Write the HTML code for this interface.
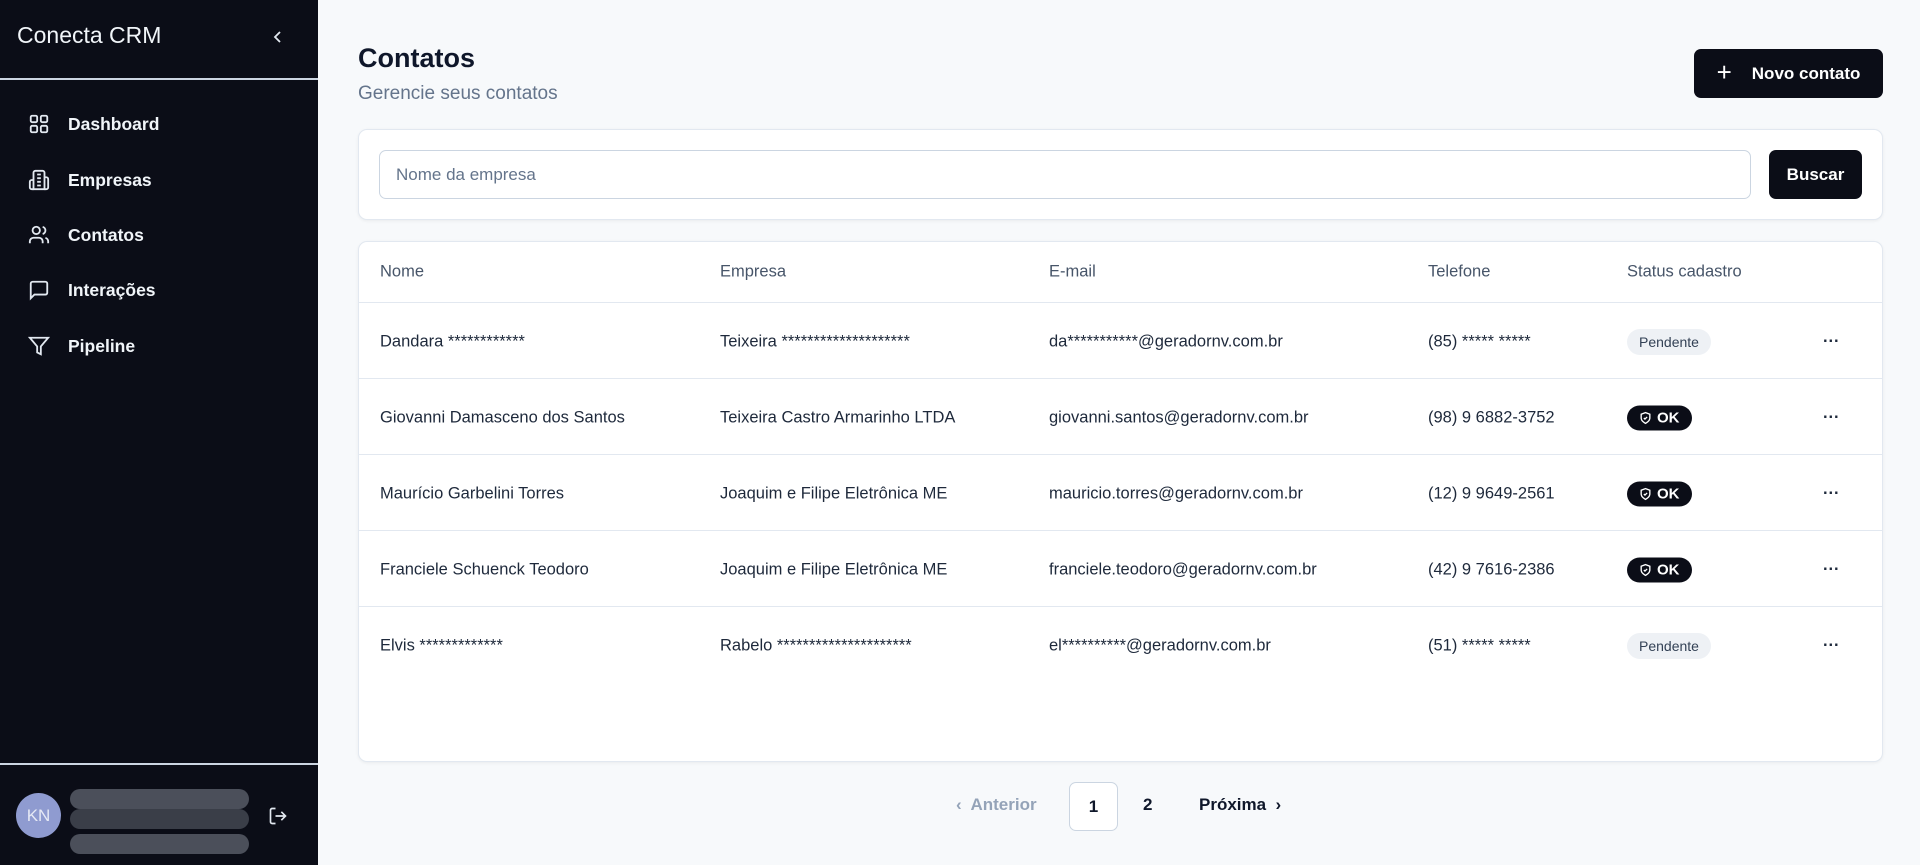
<!DOCTYPE html>
<html><head><meta charset="utf-8"><style>
*{box-sizing:border-box;margin:0;padding:0}
body{width:1920px;height:865px;overflow:hidden;background:#f7f9fb;font-family:"Liberation Sans",sans-serif;color:#0f172a;position:relative}
.sb{position:absolute;left:0;top:0;width:318px;height:865px;background:#0b0d17;color:#f1f5f9}
.sb .t{position:absolute;left:17px;top:22px;font-size:23px}
.sb .chev{position:absolute;left:272px;top:27px}
.sb .hr{position:absolute;left:0;width:318px;height:1.5px;background:#cbd5e1}
.nav{position:absolute;left:28px;display:flex;align-items:center;font-size:17.5px;font-weight:bold}
.nav svg{margin-right:18px}
.av{position:absolute;left:16px;top:793px;width:45px;height:45px;border-radius:50%;background:#8f9bd0;color:#e6e9f5;font-size:17px;display:flex;align-items:center;justify-content:center}
.bl{position:absolute;left:70px;width:179px;height:20px;border-radius:10px;background:#4b4f5a}
.h1{position:absolute;left:358px;top:43px;font-size:27px;font-weight:bold}
.sub{position:absolute;left:358px;top:83px;font-size:19px;color:#64748b}
.btn{position:absolute;background:#0b0d17;color:#fff;border-radius:7px;font-weight:bold;font-size:17px;display:flex;align-items:center;justify-content:center}
.card{position:absolute;left:358px;width:1525px;background:#fff;border:1px solid #e2e8f0;border-radius:9px;box-shadow:0 1px 3px rgba(0,0,0,.06)}
.inp{position:absolute;left:20px;top:20px;width:1372px;height:49px;border:1px solid #cbd5e1;border-radius:7px;font-size:17px;color:#64748b;padding:14px 16px}
.row{position:absolute;left:0;width:1523px;height:76px;border-top:1px solid #e2e8f0;font-size:16.5px;color:#1e293b}
.row span,.hd span{position:absolute;top:50%;transform:translateY(-50%);white-space:nowrap}
.row span{margin-top:1px}
.hd{position:absolute;left:0;top:0;width:1523px;height:60px;font-size:16.5px;color:#475569}
.pend{background:#eef1f5;color:#334155;font-size:14px;padding:5px 12px;border-radius:14px}
.ok{background:#0b0d17;color:#fff;font-size:15px;font-weight:bold;padding:4px 12px 4px 12px;border-radius:14px;display:flex;align-items:center;gap:5px}
.pg{position:absolute;top:795px;font-size:17px}
</style></head><body>
<div class="sb">
<div class="t">Conecta CRM</div>
<svg class="chev" width="12" height="20" viewBox="0 0 12 20"><path d="M8 5 L3 10 L8 15" stroke="#e2e8f0" stroke-width="1.8" fill="none"/></svg>
<div class="hr" style="top:78px"></div>
<div class="nav" style="top:113px"><svg width="22" height="22" viewBox="0 0 24 24" fill="none" stroke="#e2e8f0" stroke-width="2"><rect x="3" y="3" width="7" height="7" rx="1.5"/><rect x="14" y="3" width="7" height="7" rx="1.5"/><rect x="14" y="14" width="7" height="7" rx="1.5"/><rect x="3" y="14" width="7" height="7" rx="1.5"/></svg>Dashboard</div>
<div class="nav" style="top:169px"><svg width="22" height="22" viewBox="0 0 24 24" fill="none" stroke="#e2e8f0" stroke-width="2"><path d="M6 22V4a2 2 0 0 1 2-2h8a2 2 0 0 1 2 2v18Z"/><path d="M6 12H4a2 2 0 0 0-2 2v6a2 2 0 0 0 2 2h2M18 9h2a2 2 0 0 1 2 2v9a2 2 0 0 1-2 2h-2M10 6h4M10 10h4M10 14h4M10 18h4"/></svg>Empresas</div>
<div class="nav" style="top:224px"><svg width="22" height="22" viewBox="0 0 24 24" fill="none" stroke="#e2e8f0" stroke-width="2"><path d="M16 21v-2a4 4 0 0 0-4-4H6a4 4 0 0 0-4 4v2"/><circle cx="9" cy="7" r="4"/><path d="M22 21v-2a4 4 0 0 0-3-3.87M16 3.13a4 4 0 0 1 0 7.75"/></svg>Contatos</div>
<div class="nav" style="top:279px"><svg width="22" height="22" viewBox="0 0 24 24" fill="none" stroke="#e2e8f0" stroke-width="2"><path d="M21 15a2 2 0 0 1-2 2H7l-4 4V5a2 2 0 0 1 2-2h14a2 2 0 0 1 2 2z"/></svg>Interações</div>
<div class="nav" style="top:335px"><svg width="22" height="22" viewBox="0 0 24 24" fill="none" stroke="#e2e8f0" stroke-width="2"><path d="M22 3H2l8 9.46V19l4 2v-8.54L22 3z"/></svg>Pipeline</div>
<div class="hr" style="top:763px"></div>
<div class="av">KN</div>
<div class="bl" style="top:789px"></div><div class="bl" style="top:809px;background:#3a3e48"></div><div class="bl" style="top:834px"></div>
<svg style="position:absolute;left:268px;top:806px" width="20" height="20" viewBox="0 0 24 24" fill="none" stroke="#e2e8f0" stroke-width="2"><path d="M9 21H5a2 2 0 0 1-2-2V5a2 2 0 0 1 2-2h4M16 17l5-5-5-5M21 12H9"/></svg>
</div>
<div class="h1">Contatos</div>
<div class="sub">Gerencie seus contatos</div>
<div class="btn" style="left:1694px;top:49px;width:189px;height:49px"><span style="font-size:26px;font-weight:normal;margin-right:20px;margin-top:-3px">+</span>Novo contato</div>
<div class="card" style="top:129px;height:91px">
<div class="inp">Nome da empresa</div>
<div class="btn" style="left:1410px;top:20px;width:93px;height:49px">Buscar</div>
</div>
<div class="card" style="top:241px;height:521px">
<div class="hd"><span style="left:21px">Nome</span><span style="left:361px">Empresa</span><span style="left:690px">E-mail</span><span style="left:1069px">Telefone</span><span style="left:1268px">Status cadastro</span></div>
<div class="row" style="top:60px"><span style="left:21px">Dandara ************</span><span style="left:361px">Teixeira ********************</span><span style="left:690px">da***********@geradornv.com.br</span><span style="left:1069px">(85) ***** *****</span><span class="pend" style="left:1268px">Pendente</span><span style="left:1464px;font-weight:bold">···</span></div>
<div class="row" style="top:136px"><span style="left:21px">Giovanni Damasceno dos Santos</span><span style="left:361px">Teixeira Castro Armarinho LTDA</span><span style="left:690px">giovanni.santos@geradornv.com.br</span><span style="left:1069px">(98) 9 6882-3752</span><span class="ok" style="left:1268px"><svg width="13" height="13" viewBox="0 0 24 24" fill="none" stroke="#fff" stroke-width="2.5"><path d="M12 22s8-4 8-10V5l-8-3-8 3v7c0 6 8 10 8 10z"/><path d="M9 12l2 2 4-4"/></svg>OK</span><span style="left:1464px;font-weight:bold">···</span></div>
<div class="row" style="top:212px"><span style="left:21px">Maurício Garbelini Torres</span><span style="left:361px">Joaquim e Filipe Eletrônica ME</span><span style="left:690px">mauricio.torres@geradornv.com.br</span><span style="left:1069px">(12) 9 9649-2561</span><span class="ok" style="left:1268px"><svg width="13" height="13" viewBox="0 0 24 24" fill="none" stroke="#fff" stroke-width="2.5"><path d="M12 22s8-4 8-10V5l-8-3-8 3v7c0 6 8 10 8 10z"/><path d="M9 12l2 2 4-4"/></svg>OK</span><span style="left:1464px;font-weight:bold">···</span></div>
<div class="row" style="top:288px"><span style="left:21px">Franciele Schuenck Teodoro</span><span style="left:361px">Joaquim e Filipe Eletrônica ME</span><span style="left:690px">franciele.teodoro@geradornv.com.br</span><span style="left:1069px">(42) 9 7616-2386</span><span class="ok" style="left:1268px"><svg width="13" height="13" viewBox="0 0 24 24" fill="none" stroke="#fff" stroke-width="2.5"><path d="M12 22s8-4 8-10V5l-8-3-8 3v7c0 6 8 10 8 10z"/><path d="M9 12l2 2 4-4"/></svg>OK</span><span style="left:1464px;font-weight:bold">···</span></div>
<div class="row" style="top:364px"><span style="left:21px">Elvis *************</span><span style="left:361px">Rabelo *********************</span><span style="left:690px">el**********@geradornv.com.br</span><span style="left:1069px">(51) ***** *****</span><span class="pend" style="left:1268px">Pendente</span><span style="left:1464px;font-weight:bold">···</span></div>
</div>
<div class="pg" style="left:956px;color:#94a3b8;font-weight:bold">‹&nbsp; Anterior</div>
<div style="position:absolute;left:1069px;top:782px;width:49px;height:49px;border:1px solid #cbd5e1;border-radius:7px;background:#fff;display:flex;align-items:center;justify-content:center;font-size:17px;font-weight:bold">1</div>
<div class="pg" style="left:1143px;font-weight:bold">2</div>
<div class="pg" style="left:1199px;font-weight:bold">Próxima &nbsp;›</div>
</body></html>
